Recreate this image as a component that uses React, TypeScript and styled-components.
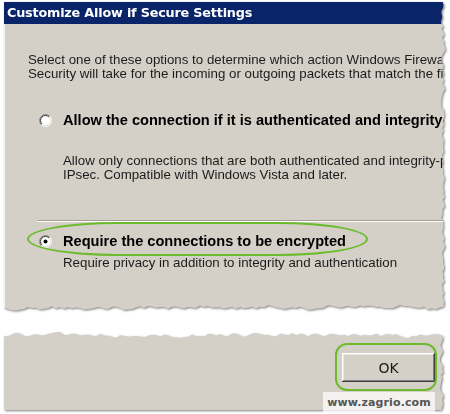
import React from 'react';
import styled, { createGlobalStyle } from 'styled-components';

const GlobalStyle = createGlobalStyle`
  html, body { margin: 0; padding: 0; background: #ffffff; }
  body { width: 450px; height: 414px; overflow: hidden; }
`;

function makeRng(seed: number) {
  let s = seed;
  return () => {
    s = (s * 1103515245 + 12345) % 2147483648;
    return s / 2147483648;
  };
}

type Pt = [number, number];
const toPoly = (pts: Pt[]) =>
  `polygon(${pts.map(([x, y]) => `${x.toFixed(1)}px ${y.toFixed(1)}px`).join(', ')})`;

function topPaperClip(w: number, h: number): string {
  const r = makeRng(7);
  const pts: Pt[] = [[0, 0]];
  let v = 0.5;
  for (let y = 0; y < h - 6; y += 3) {
    v = v * 0.45 + r() * 0.55;
    pts.push([w - 1 - v * 6, y]);
  }
  v = 0.5;
  for (let x = w - 3; x > 0; x -= 4) {
    v = v * 0.5 + r() * 0.5;
    pts.push([x, h - 1 - v * 7]);
  }
  pts.push([0, h - 4]);
  return toPoly(pts);
}

function bottomPaperClip(w: number, h: number): string {
  const r = makeRng(23);
  const pts: Pt[] = [[0, 6]];
  let v = 0.5;
  for (let x = 0; x < w - 4; x += 4) {
    v = v * 0.5 + r() * 0.5;
    pts.push([x, 1 + v * 8]);
  }
  v = 0.5;
  for (let y = 6; y < h; y += 3) {
    v = v * 0.45 + r() * 0.55;
    pts.push([w - 1 - v * 6, y]);
  }
  pts.push([w - 4, h]);
  pts.push([0, h]);
  return toPoly(pts);
}

const TOP_CLIP = topPaperClip(443, 310);
const BOTTOM_CLIP = bottomPaperClip(442, 80);

const Page = styled.div`
  position: relative;
  width: 450px;
  height: 414px;
  padding: 2px 0 0 4px;
  box-sizing: border-box;
  display: flex;
  flex-direction: column;
  background: #ffffff;
`;

const Sheet = styled.div<{ $gap?: number }>`
  margin-top: ${(p) => p.$gap ?? 0}px;
  filter: drop-shadow(1px 1px 1.2px rgba(0, 0, 0, 0.5));
`;

const Paper = styled.div<{ $clip: string; $w: number; $h: number }>`
  width: ${(p) => p.$w}px;
  height: ${(p) => p.$h}px;
  background: #d4d0c8;
  clip-path: ${(p) => p.$clip};
  display: flex;
  flex-direction: column;
  overflow: hidden;
`;

const TitleBar = styled.div`
  height: 22px;
  background: #0a246a;
  color: #ffffff;
  font-family: 'DejaVu Sans', Verdana, sans-serif;
  font-weight: bold;
  font-size: 12.8px;
  letter-spacing: -0.2px;
  line-height: 22px;
  padding-left: 3px;
  white-space: nowrap;
  flex-shrink: 0;
`;

const DialogBody = styled.div`
  display: flex;
  flex-direction: column;
  padding: 29px 0 0 23px;
  border-left: 1px solid #f4f3ef;
  flex: 1;
  font-family: 'Liberation Sans', Arial, sans-serif;
  color: #1c1c1c;
`;

const TextBlock = styled.div<{ $top: number; $left?: number }>`
  margin-top: ${(p) => p.$top}px;
  margin-left: ${(p) => p.$left ?? 0}px;
  font-size: 13.3px;
  line-height: 14px;
  white-space: nowrap;
`;

const Line = styled.span`
  display: block;
`;

const OptionRow = styled.div<{ $top: number }>`
  position: relative;
  margin-top: ${(p) => p.$top}px;
  margin-left: 11px;
  height: 16px;
  display: flex;
  align-items: center;
  gap: 11px;
  white-space: nowrap;
`;

const OptionLabel = styled.span`
  font-size: 14.6px;
  font-weight: bold;
  color: #000;
  line-height: 16px;
`;

const Separator = styled.div<{ $top: number }>`
  margin-top: ${(p) => p.$top}px;
  margin-left: 10px;
  border-top: 1px solid #a29f98;
  border-bottom: 1px solid #ffffff;
`;

const OvalMark = styled.div`
  position: absolute;
  left: -12px;
  top: -11px;
  width: 337px;
  height: 30px;
  border: 2px solid #6cbb2c;
  border-radius: 90px / 17px;
  pointer-events: none;
`;

const ButtonBar = styled.div`
  display: flex;
  justify-content: flex-end;
  padding: 23px 11px 0 0;
`;

const ButtonWrap = styled.div`
  position: relative;
`;

const OkButton = styled.button`
  width: 93px;
  height: 29px;
  background: #d4d0c8;
  border: none;
  box-shadow: inset -1px -1px 0 #404040, inset 1px 1px 0 #ffffff, inset -2px -2px 0 #808080, inset 2px 2px 0 #e8e6e0;
  font-family: 'DejaVu Sans', Tahoma, sans-serif;
  font-size: 14px;
  color: #1a1a1a;
  padding: 0;
`;

const ButtonMark = styled.div`
  position: absolute;
  left: -7px;
  top: -10px;
  width: 98px;
  height: 44px;
  border: 2px solid #6cbb2c;
  border-radius: 12px;
  pointer-events: none;
`;

const Watermark = styled.div`
  position: absolute;
  left: 323px;
  top: 392px;
  width: 112px;
  height: 22px;
  background: rgba(255, 255, 255, 0.72);
  color: #555555;
  font-family: 'DejaVu Sans', Verdana, sans-serif;
  font-weight: bold;
  font-size: 11px;
  line-height: 22px;
  text-align: center;
  letter-spacing: 0.1px;
`;

const RadioSvg: React.FC<{ checked?: boolean }> = ({ checked }) => {
  const c = 6.5;
  const arc = (r: number, color: string, first: boolean) => {
    const d = r * 0.7071;
    const path = first
      ? `M ${c - d} ${c + d} A ${r} ${r} 0 0 1 ${c + d} ${c - d}`
      : `M ${c + d} ${c - d} A ${r} ${r} 0 0 1 ${c - d} ${c + d}`;
    return <path d={path} stroke={color} strokeWidth={1} fill="none" />;
  };
  return (
    <svg width="13" height="13" viewBox="0 0 13 13" style={{ flexShrink: 0 }}>
      <circle cx={c} cy={c} r={5} fill="#ffffff" />
      {arc(6, '#8a8780', true)}
      {arc(6, '#ffffff', false)}
      {arc(5, '#3a3a3a', true)}
      {arc(5, '#e4e2dc', false)}
      {checked && <circle cx={c} cy={c} r={2} fill="#000000" />}
    </svg>
  );
};

export default function App() {
  return (
    <>
      <GlobalStyle />
      <Page>
        <Sheet>
          <Paper $clip={TOP_CLIP} $w={443} $h={310}>
            <TitleBar>Customize Allow if Secure Settings</TitleBar>
            <DialogBody>
              <TextBlock $top={0}>
                <Line>Select one of these options to determine which action Windows Firewall with Advanced</Line>
                <Line>Security will take for the incoming or outgoing packets that match the firewall rule.</Line>
              </TextBlock>
              <OptionRow $top={31}>
                <RadioSvg />
                <OptionLabel>Allow the connection if it is authenticated and integrity-protected</OptionLabel>
              </OptionRow>
              <TextBlock $top={26} $left={35}>
                <Line>Allow only connections that are both authenticated and integrity-protected by using</Line>
                <Line>IPsec. Compatible with Windows Vista and later.</Line>
              </TextBlock>
              <Separator $top={38} />
              <OptionRow $top={11}>
                <RadioSvg checked />
                <OptionLabel>Require the connections to be encrypted</OptionLabel>
                <OvalMark />
              </OptionRow>
              <TextBlock $top={7} $left={35}>
                <Line>Require privacy in addition to integrity and authentication</Line>
              </TextBlock>
            </DialogBody>
          </Paper>
        </Sheet>
        <Sheet $gap={18}>
          <Paper $clip={BOTTOM_CLIP} $w={442} $h={80}>
            <ButtonBar>
              <ButtonWrap>
                <OkButton>OK</OkButton>
                <ButtonMark />
              </ButtonWrap>
            </ButtonBar>
          </Paper>
        </Sheet>
        <Watermark>www.zagrio.com</Watermark>
      </Page>
    </>
  );
}
